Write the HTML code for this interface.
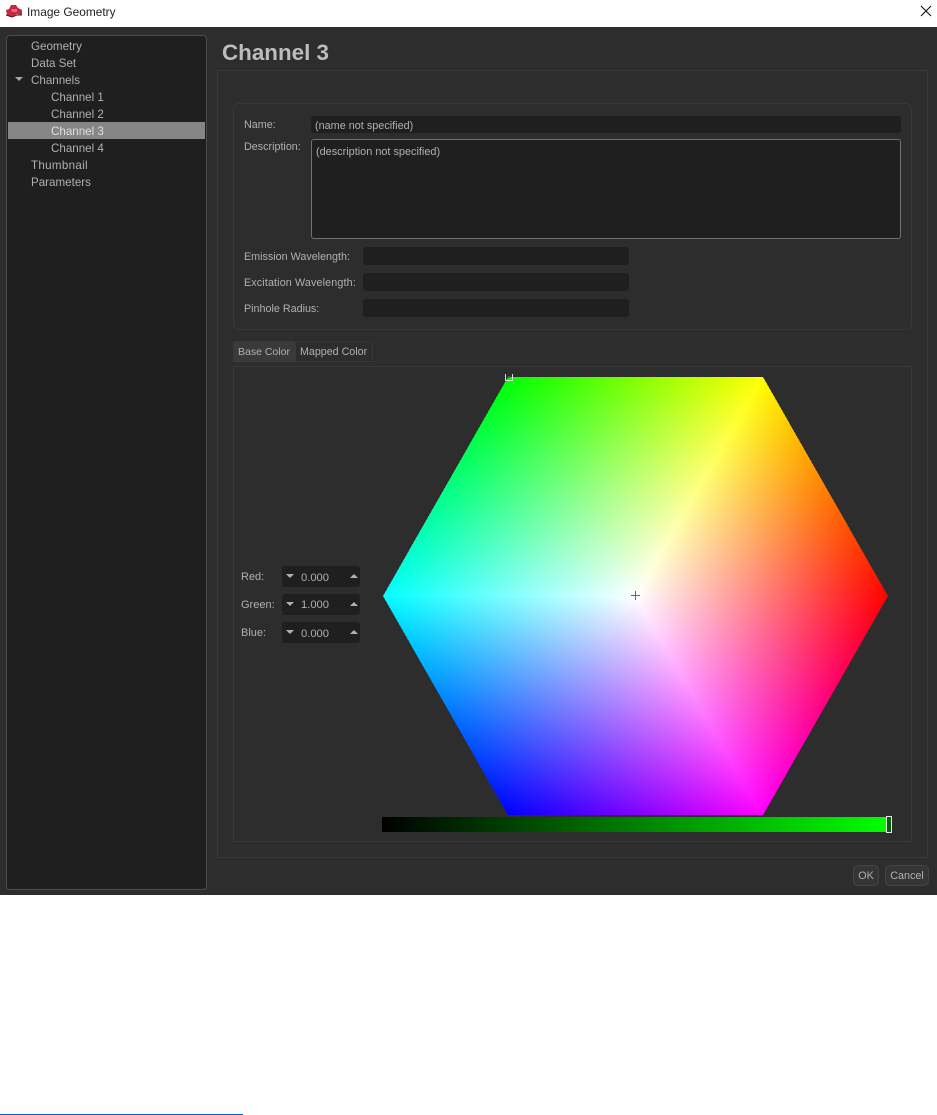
<!DOCTYPE html>
<html><head><meta charset="utf-8"><title>Image Geometry</title>
<style>
html,body{margin:0;padding:0;background:#fff}
body{position:relative;width:937px;height:1115px;overflow:hidden;font-family:"Liberation Sans",sans-serif;font-size:11.6px;color:#b0b0b0}
.a{position:absolute;box-sizing:border-box}
.t{position:absolute;white-space:nowrap;line-height:16px;height:16px}
.l{font-size:10.75px}
.inp{position:absolute;box-sizing:border-box;background:#201f20;border-radius:3px}
.spin{position:absolute;box-sizing:border-box;left:282px;width:78px;height:21px;background:#201f20;border-radius:3px;font-size:11.2px}
.btn{position:absolute;box-sizing:border-box;top:865px;height:21px;background:#353535;border:1px solid #454545;border-radius:5px;text-align:center;line-height:20px;color:#b0b0b0;font-size:10.8px}
.dn,.up{position:absolute;left:4px;top:8px;width:0;height:0;border-left:4px solid transparent;border-right:4px solid transparent}
.dn{border-top:4px solid #b0b0b0}
.up{left:68px;border-bottom:4px solid #b0b0b0}
</style></head><body>
<div class="a" style="left:0;top:0;width:937px;height:27px;background:#fff"></div>
<svg class="a" style="left:5px;top:4px" width="18" height="14" viewBox="0 0 18 14"><path d="M1 6 L4 5 L6 1 L11 1 L13 4 L17 6 L17 11 L12 10 L7 13 L2 11 Z" fill="#c8283f"/><path d="M6 5 L12 5 L12 8 L7 8 Z" fill="#e8687c"/><path d="M1 11 L7 13 L12 11 L17 11" stroke="#4a1a20" stroke-width="1" fill="none"/></svg>
<div class="t" style="left:27px;top:4px;color:#222;font-size:11.9px">Image Geometry</div>
<svg class="a" style="left:920px;top:5px" width="12" height="12" viewBox="0 0 12 12"><path d="M1 1 L11 11 M11 1 L1 11" stroke="#111" stroke-width="1.1" fill="none"/></svg>

<div class="a" style="left:0;top:27px;width:937px;height:868px;background:#2e2d2e"></div>

<div class="a" style="left:6px;top:35px;width:201px;height:855px;background:#201f20;border:1px solid #4c4c4c;border-radius:4px"></div>
<div class="a" style="left:8px;top:122px;width:197px;height:17px;background:#868686"></div>
<div class="t" style="left:31px;top:39px">Geometry</div>
<div class="t" style="left:31px;top:56px">Data Set</div>
<div class="a" style="left:15px;top:77px;width:0;height:0;border-left:4px solid transparent;border-right:4px solid transparent;border-top:4px solid #aaa"></div>
<div class="t" style="left:31px;top:73px">Channels</div>
<div class="t" style="left:51px;top:90px">Channel 1</div>
<div class="t" style="left:51px;top:107px">Channel 2</div>
<div class="t" style="left:51px;top:124px;color:#e0e0e0">Channel 3</div>
<div class="t" style="left:51px;top:141px">Channel 4</div>
<div class="t" style="left:31px;top:158px;letter-spacing:.3px">Thumbnail</div>
<div class="t" style="left:31px;top:175px">Parameters</div>

<div class="t" style="left:222px;top:40px;height:26px;line-height:26px;font-size:22.4px;font-weight:bold;color:#bdbdbd">Channel 3</div>

<div class="a" style="left:217px;top:70px;width:711px;height:788px;border:1px solid #383838;border-radius:2px"></div>
<div class="a" style="left:233px;top:103px;width:679px;height:227px;border:1px solid #383838;border-radius:6px"></div>

<div class="t l" style="left:244px;top:117px">Name:</div>
<div class="inp" style="left:311px;top:116px;width:590px;height:17px"></div>
<div class="t l" style="left:315px;top:118px;font-size:10.85px">(name not specified)</div>
<div class="t l" style="left:244px;top:139px">Description:</div>
<div class="inp" style="left:311px;top:139px;width:590px;height:100px;border:1px solid #707070"></div>
<div class="t l" style="left:316px;top:144px;font-size:10.9px">(description not specified)</div>
<div class="t l" style="left:244px;top:249px">Emission Wavelength:</div>
<div class="inp" style="left:363px;top:247px;width:266px;height:18px"></div>
<div class="t l" style="left:244px;top:275px;letter-spacing:.13px">Excitation Wavelength:</div>
<div class="inp" style="left:363px;top:273px;width:266px;height:18px"></div>
<div class="t l" style="left:244px;top:301px">Pinhole Radius:</div>
<div class="inp" style="left:363px;top:299px;width:266px;height:18px"></div>

<div class="a" style="left:233px;top:341px;width:63px;height:21px;background:#3b3a3b;border-radius:3px 3px 0 0"></div>
<div class="a" style="left:296px;top:341px;width:77px;height:21px;border:1px solid #363636;border-left:0;border-radius:0 3px 0 0"></div>
<div class="t" style="left:238px;top:344px;font-size:10.5px">Base Color</div>
<div class="t" style="left:300px;top:344px;font-size:10.7px">Mapped Color</div>
<div class="a" style="left:233px;top:366px;width:679px;height:476px;border:1px solid #383838"></div>

<div class="t" style="left:241px;top:569px;font-size:11px">Red:</div>
<div class="t" style="left:241px;top:597px;font-size:11px">Green:</div>
<div class="t" style="left:241px;top:625px;font-size:11px">Blue:</div>
<div class="spin" style="top:566px"><div class="dn"></div><div class="up"></div><div class="t" style="left:19px;top:4px">0.000</div></div>
<div class="spin" style="top:594px"><div class="dn"></div><div class="up"></div><div class="t" style="left:19px;top:3px">1.000</div></div>
<div class="spin" style="top:622px"><div class="dn"></div><div class="up"></div><div class="t" style="left:19px;top:4px">0.000</div></div>

<svg class="a" style="left:0;top:0" width="937" height="895" viewBox="0 0 937 895">
<defs>
<linearGradient id="b1" gradientUnits="userSpaceOnUse" x1="635.5" y1="596" x2="635.5" y2="377"><stop offset="0" stop-color="#fff"/><stop offset="1" stop-color="#ff0"/></linearGradient>
<linearGradient id="v1" gradientUnits="userSpaceOnUse" x1="508" y1="377" x2="699.25" y2="486.5"><stop offset="0" stop-color="#0ff"/><stop offset="1" stop-color="#fff"/></linearGradient>
<linearGradient id="b2" gradientUnits="userSpaceOnUse" x1="635.5" y1="596" x2="825.5" y2="486.25"><stop offset="0" stop-color="#fff"/><stop offset="1" stop-color="#ff0"/></linearGradient>
<linearGradient id="v2" gradientUnits="userSpaceOnUse" x1="888" y1="596" x2="699.25" y2="486.5"><stop offset="0" stop-color="#f0f"/><stop offset="1" stop-color="#fff"/></linearGradient>
<linearGradient id="b3" gradientUnits="userSpaceOnUse" x1="635.5" y1="596" x2="825.5" y2="705.5"><stop offset="0" stop-color="#fff"/><stop offset="1" stop-color="#f0f"/></linearGradient>
<linearGradient id="v3" gradientUnits="userSpaceOnUse" x1="888" y1="596" x2="699.25" y2="705.5"><stop offset="0" stop-color="#ff0"/><stop offset="1" stop-color="#fff"/></linearGradient>
<linearGradient id="b4" gradientUnits="userSpaceOnUse" x1="635.5" y1="596" x2="635.5" y2="815"><stop offset="0" stop-color="#fff"/><stop offset="1" stop-color="#f0f"/></linearGradient>
<linearGradient id="v4" gradientUnits="userSpaceOnUse" x1="508" y1="815" x2="699.25" y2="705.5"><stop offset="0" stop-color="#0ff"/><stop offset="1" stop-color="#fff"/></linearGradient>
<linearGradient id="b5" gradientUnits="userSpaceOnUse" x1="635.5" y1="596" x2="445.5" y2="705.5"><stop offset="0" stop-color="#fff"/><stop offset="1" stop-color="#0ff"/></linearGradient>
<linearGradient id="v5" gradientUnits="userSpaceOnUse" x1="508" y1="815" x2="509.25" y2="596"><stop offset="0" stop-color="#f0f"/><stop offset="1" stop-color="#fff"/></linearGradient>
<linearGradient id="b6" gradientUnits="userSpaceOnUse" x1="635.5" y1="596" x2="445.5" y2="486.25"><stop offset="0" stop-color="#fff"/><stop offset="1" stop-color="#0ff"/></linearGradient>
<linearGradient id="v6" gradientUnits="userSpaceOnUse" x1="508" y1="377" x2="509.25" y2="596"><stop offset="0" stop-color="#ff0"/><stop offset="1" stop-color="#fff"/></linearGradient>
<linearGradient id="sl" x1="0" x2="1" y1="0" y2="0"><stop offset="0" stop-color="#000"/><stop offset="1" stop-color="#0f0"/></linearGradient>
</defs>
<g style="isolation:isolate" shape-rendering="crispEdges">
<polygon points="508,377 763,377 888,596 763,815 508,815 383,596" fill="#fff"/>
<polygon points="635.5,596 508,377 763,377" fill="url(#b1)" style="mix-blend-mode:multiply"/>
<polygon points="635.5,596 508,377 763,377" fill="url(#v1)" style="mix-blend-mode:multiply"/>
<polygon points="635.5,596 763,377 888,596" fill="url(#b2)" style="mix-blend-mode:multiply"/>
<polygon points="635.5,596 763,377 888,596" fill="url(#v2)" style="mix-blend-mode:multiply"/>
<polygon points="635.5,596 888,596 763,815" fill="url(#b3)" style="mix-blend-mode:multiply"/>
<polygon points="635.5,596 888,596 763,815" fill="url(#v3)" style="mix-blend-mode:multiply"/>
<polygon points="635.5,596 763,815 508,815" fill="url(#b4)" style="mix-blend-mode:multiply"/>
<polygon points="635.5,596 763,815 508,815" fill="url(#v4)" style="mix-blend-mode:multiply"/>
<polygon points="635.5,596 508,815 383,596" fill="url(#b5)" style="mix-blend-mode:multiply"/>
<polygon points="635.5,596 508,815 383,596" fill="url(#v5)" style="mix-blend-mode:multiply"/>
<polygon points="635.5,596 383,596 508,377" fill="url(#b6)" style="mix-blend-mode:multiply"/>
<polygon points="635.5,596 383,596 508,377" fill="url(#v6)" style="mix-blend-mode:multiply"/>
</g>
<path d="M631 595.5H640M635.5 591V600" stroke="#666" stroke-width="1" fill="none"/>
<path d="M505.5 374V380.5H512.5V374" stroke="#ddd" stroke-width="1" fill="none"/>
<rect x="508" y="376" width="2" height="2" fill="#2b7a2b"/>
<rect x="382" y="817" width="505" height="15" fill="url(#sl)"/>
<rect x="886.5" y="816.5" width="5" height="16" fill="#0b5c0b" stroke="#e8e8e8" stroke-width="1"/>
</svg>

<div class="btn" style="left:853px;width:26px">OK</div>
<div class="btn" style="left:885px;width:44px">Cancel</div>

<div class="a" style="left:0;top:1114px;width:243px;height:1px;background:#0a66c8"></div>
</body></html>
